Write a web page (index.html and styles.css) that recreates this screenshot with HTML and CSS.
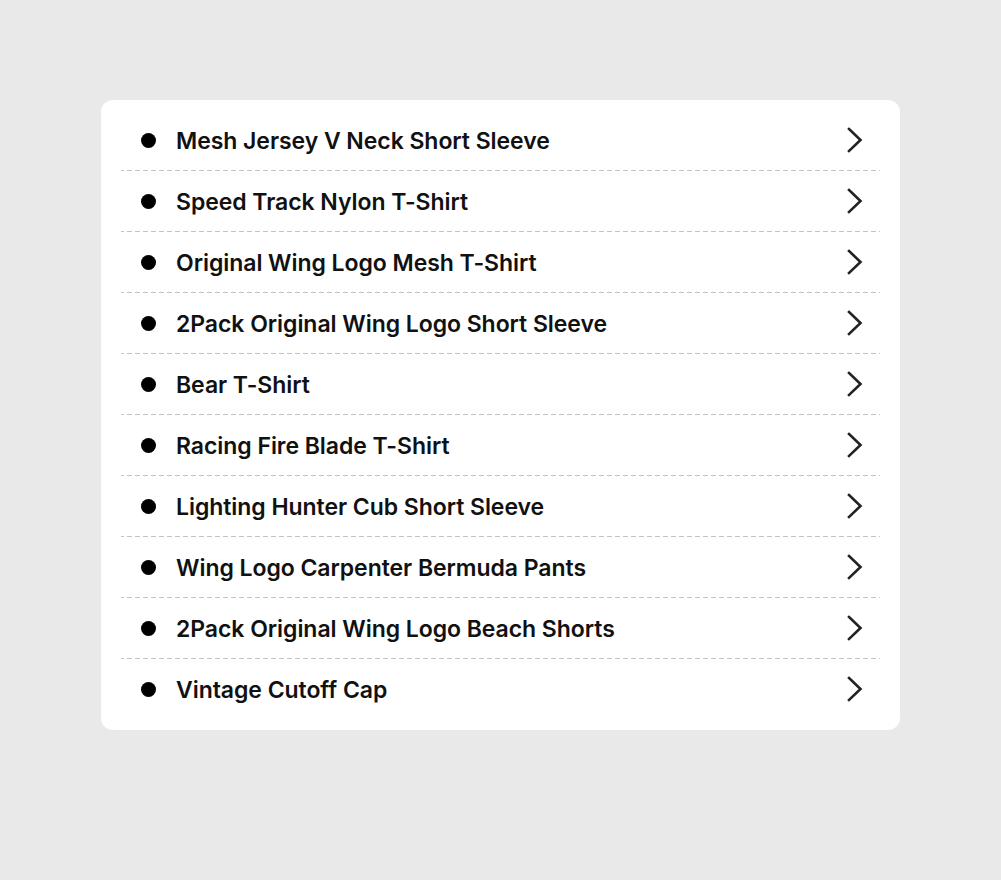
FILE: index.html
```html
<!DOCTYPE html>
<html>
<head>
<meta charset="utf-8">
<link rel="stylesheet" href="styles.css">
</head>
<body>
<div class="card">
  <ul class="list">
    <li class="row"><span class="dot"></span><span class="label">Mesh Jersey V Neck Short Sleeve</span><svg class="chev" viewBox="0 0 16 26"><path d="M2 2 L13.5 13 L2 24"/></svg></li>
    <li class="row"><span class="dot"></span><span class="label">Speed Track Nylon T-Shirt</span><svg class="chev" viewBox="0 0 16 26"><path d="M2 2 L13.5 13 L2 24"/></svg></li>
    <li class="row"><span class="dot"></span><span class="label">Original Wing Logo Mesh T-Shirt</span><svg class="chev" viewBox="0 0 16 26"><path d="M2 2 L13.5 13 L2 24"/></svg></li>
    <li class="row"><span class="dot"></span><span class="label">2Pack Original Wing Logo Short Sleeve</span><svg class="chev" viewBox="0 0 16 26"><path d="M2 2 L13.5 13 L2 24"/></svg></li>
    <li class="row"><span class="dot"></span><span class="label">Bear T-Shirt</span><svg class="chev" viewBox="0 0 16 26"><path d="M2 2 L13.5 13 L2 24"/></svg></li>
    <li class="row"><span class="dot"></span><span class="label">Racing Fire Blade T-Shirt</span><svg class="chev" viewBox="0 0 16 26"><path d="M2 2 L13.5 13 L2 24"/></svg></li>
    <li class="row"><span class="dot"></span><span class="label">Lighting Hunter Cub Short Sleeve</span><svg class="chev" viewBox="0 0 16 26"><path d="M2 2 L13.5 13 L2 24"/></svg></li>
    <li class="row"><span class="dot"></span><span class="label">Wing Logo Carpenter Bermuda Pants</span><svg class="chev" viewBox="0 0 16 26"><path d="M2 2 L13.5 13 L2 24"/></svg></li>
    <li class="row"><span class="dot"></span><span class="label">2Pack Original Wing Logo Beach Shorts</span><svg class="chev" viewBox="0 0 16 26"><path d="M2 2 L13.5 13 L2 24"/></svg></li>
    <li class="row"><span class="dot"></span><span class="label">Vintage Cutoff Cap</span><svg class="chev" viewBox="0 0 16 26"><path d="M2 2 L13.5 13 L2 24"/></svg></li>
  </ul>
</div>
</body>
</html>
```
FILE: styles.css
```css
html, body {
  margin: 0;
  padding: 0;
}
body {
  background: #e9e9e9;
  width: 1001px;
  height: 880px;
  padding-top: 100px;
  box-sizing: border-box;
  font-family: Inter, "Noto Sans", sans-serif;
}
.card {
  margin-left: 101px;
  width: 799px;
  height: 630px;
  box-sizing: border-box;
  background: #fff;
  border-radius: 12px;
  padding: 10px 20px 11px;
}
.list {
  list-style: none;
  margin: 0;
  padding: 0;
}
.row {
  display: flex;
  align-items: center;
  height: 60px;
  padding: 0 17px 0 20px;
  background-image: repeating-linear-gradient(to right, #c4c4c4 0 3px, transparent 3px 6px, #c4c4c4 6px 8px);
  background-size: 100% 1px;
  background-repeat: no-repeat;
  background-position: left bottom;
  padding-bottom: 1px;
}
.row:last-child {
  background-image: none;
}
.dot {
  width: 15px;
  height: 15px;
  border-radius: 50%;
  background: #000;
  flex: none;
}
.label {
  margin-left: 20px;
  padding-top: 2px;
  font-size: 23px;
  font-weight: 600;
  letter-spacing: -0.05px;
  color: #111;
  flex: 1;
}
.chev {
  width: 16px;
  height: 26px;
  flex: none;
  fill: none;
  stroke: #222;
  stroke-width: 2.6;
  stroke-linecap: square;
  stroke-linejoin: miter;
}
```
